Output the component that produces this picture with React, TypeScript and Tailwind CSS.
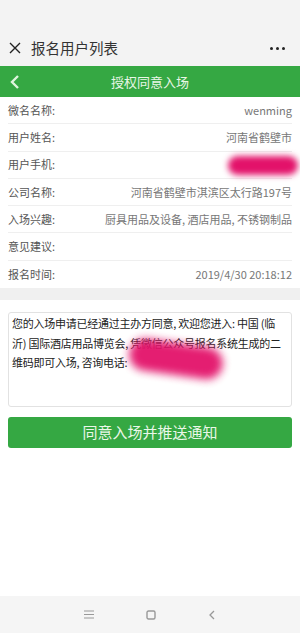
import React from 'react';

const rows: { label: string; value: React.ReactNode }[] = [
  { label: '微名名称:', value: 'wenming' },
  { label: '用户姓名:', value: '河南省鹤壁市' },
  {
    label: '用户手机:',
    value: <span className="inline-block w-[70px] h-[19px] mr-[-6px] rounded-full bg-[#e3126a] blur-[3px] align-middle" />,
  },
  { label: '公司名称:', value: '河南省鹤壁市淇滨区太行路197号' },
  { label: '入场兴趣:', value: '厨具用品及设备, 酒店用品, 不锈钢制品' },
  { label: '意见建议:', value: '' },
  { label: '报名时间:', value: '2019/4/30 20:18:12' },
];

export default function App() {
  return (
    <div
      className="w-[300px] h-[633px] flex flex-col bg-white overflow-hidden"
      style={{ fontFamily: '"Noto Sans CJK SC", "Noto Sans", sans-serif' }}
    >
      {/* Top bar */}
      <div className="h-[66px] bg-[#f3f3f3] flex items-end pb-[8px] px-[9px]">
        <div className="flex items-center w-full h-[20px]">
          <svg width="12" height="12" viewBox="0 0 12 12" className="mr-[10px]">
            <path d="M1 1L11 11M11 1L1 11" stroke="#222" strokeWidth="1.4" />
          </svg>
          <span className="text-[14.5px] text-[#333] leading-none">报名用户列表</span>
          <div className="ml-auto flex gap-[3px] mr-[6px]">
            <span className="w-[3px] h-[3px] rounded-full bg-[#222]" />
            <span className="w-[3px] h-[3px] rounded-full bg-[#222]" />
            <span className="w-[3px] h-[3px] rounded-full bg-[#222]" />
          </div>
        </div>
      </div>

      {/* Green header */}
      <div className="h-[31px] bg-[#35a843] flex items-center px-[10px] relative">
        <svg width="10" height="14" viewBox="0 0 10 14">
          <path d="M8 1L2 7L8 13" stroke="#dff5de" strokeWidth="2.4" fill="none" />
        </svg>
        <span className="absolute left-0 right-0 text-center text-[13px] text-[#e8f6e6] leading-none">
          授权同意入场
        </span>
      </div>

      {/* Info rows */}
      <div className="flex flex-col px-[8px]">
        {rows.map((r, i) => (
          <div
            key={r.label}
            className={`h-[27.3px] flex items-center justify-between text-[11px] ${
              i < rows.length - 1 ? 'border-b border-[#efefef]' : ''
            }`}
          >
            <span className="text-[#555]">{r.label}</span>
            <span className="text-[#777]">{r.value}</span>
          </div>
        ))}
      </div>

      <div className="h-[12px] bg-[#f0f0f0]" />

      {/* Message and button */}
      <div className="px-[8px] pt-[12px]">
        <div className="relative h-[95px] border border-[#e2e2e2] rounded-[3px] px-[3px] pt-[1px] text-[11px] leading-[19.6px] tracking-[-0.25px] text-[#222] whitespace-nowrap">
          您的入场申请已经通过主办方同意, 欢迎您进入: 中国 (临
          <br />
          沂) 国际酒店用品博览会, 凭微信公众号报名系统生成的二
          <br />
          维码即可入场, 咨询电话:
          <span className="absolute left-[120px] top-[30px] w-[94px] h-[32px] rounded-full bg-[#e3126a] blur-[4px] rotate-[8deg] opacity-95" />
        </div>
        <button className="mt-[10px] w-full h-[31px] rounded-[3px] bg-[#35a843] text-[15px] text-[#eaf7e8] flex items-center justify-center">
          同意入场并推送通知
        </button>
      </div>

      <div className="flex-1" />

      {/* Android nav */}
      <div className="h-[37px] bg-[#f5f5f5] flex items-center justify-center gap-[52px]">
        <svg width="10" height="9" viewBox="0 0 10 9">
          <path d="M0 1H10M0 4.5H10M0 8H10" stroke="#999" strokeWidth="1.1" />
        </svg>
        <svg width="10" height="10" viewBox="0 0 10 10">
          <rect x="1" y="1" width="8" height="8" rx="1.5" stroke="#999" strokeWidth="1.4" fill="none" />
        </svg>
        <svg width="8" height="10" viewBox="0 0 8 10">
          <path d="M6 1L2 5L6 9" stroke="#999" strokeWidth="1.3" fill="none" />
        </svg>
      </div>
    </div>
  );
}
